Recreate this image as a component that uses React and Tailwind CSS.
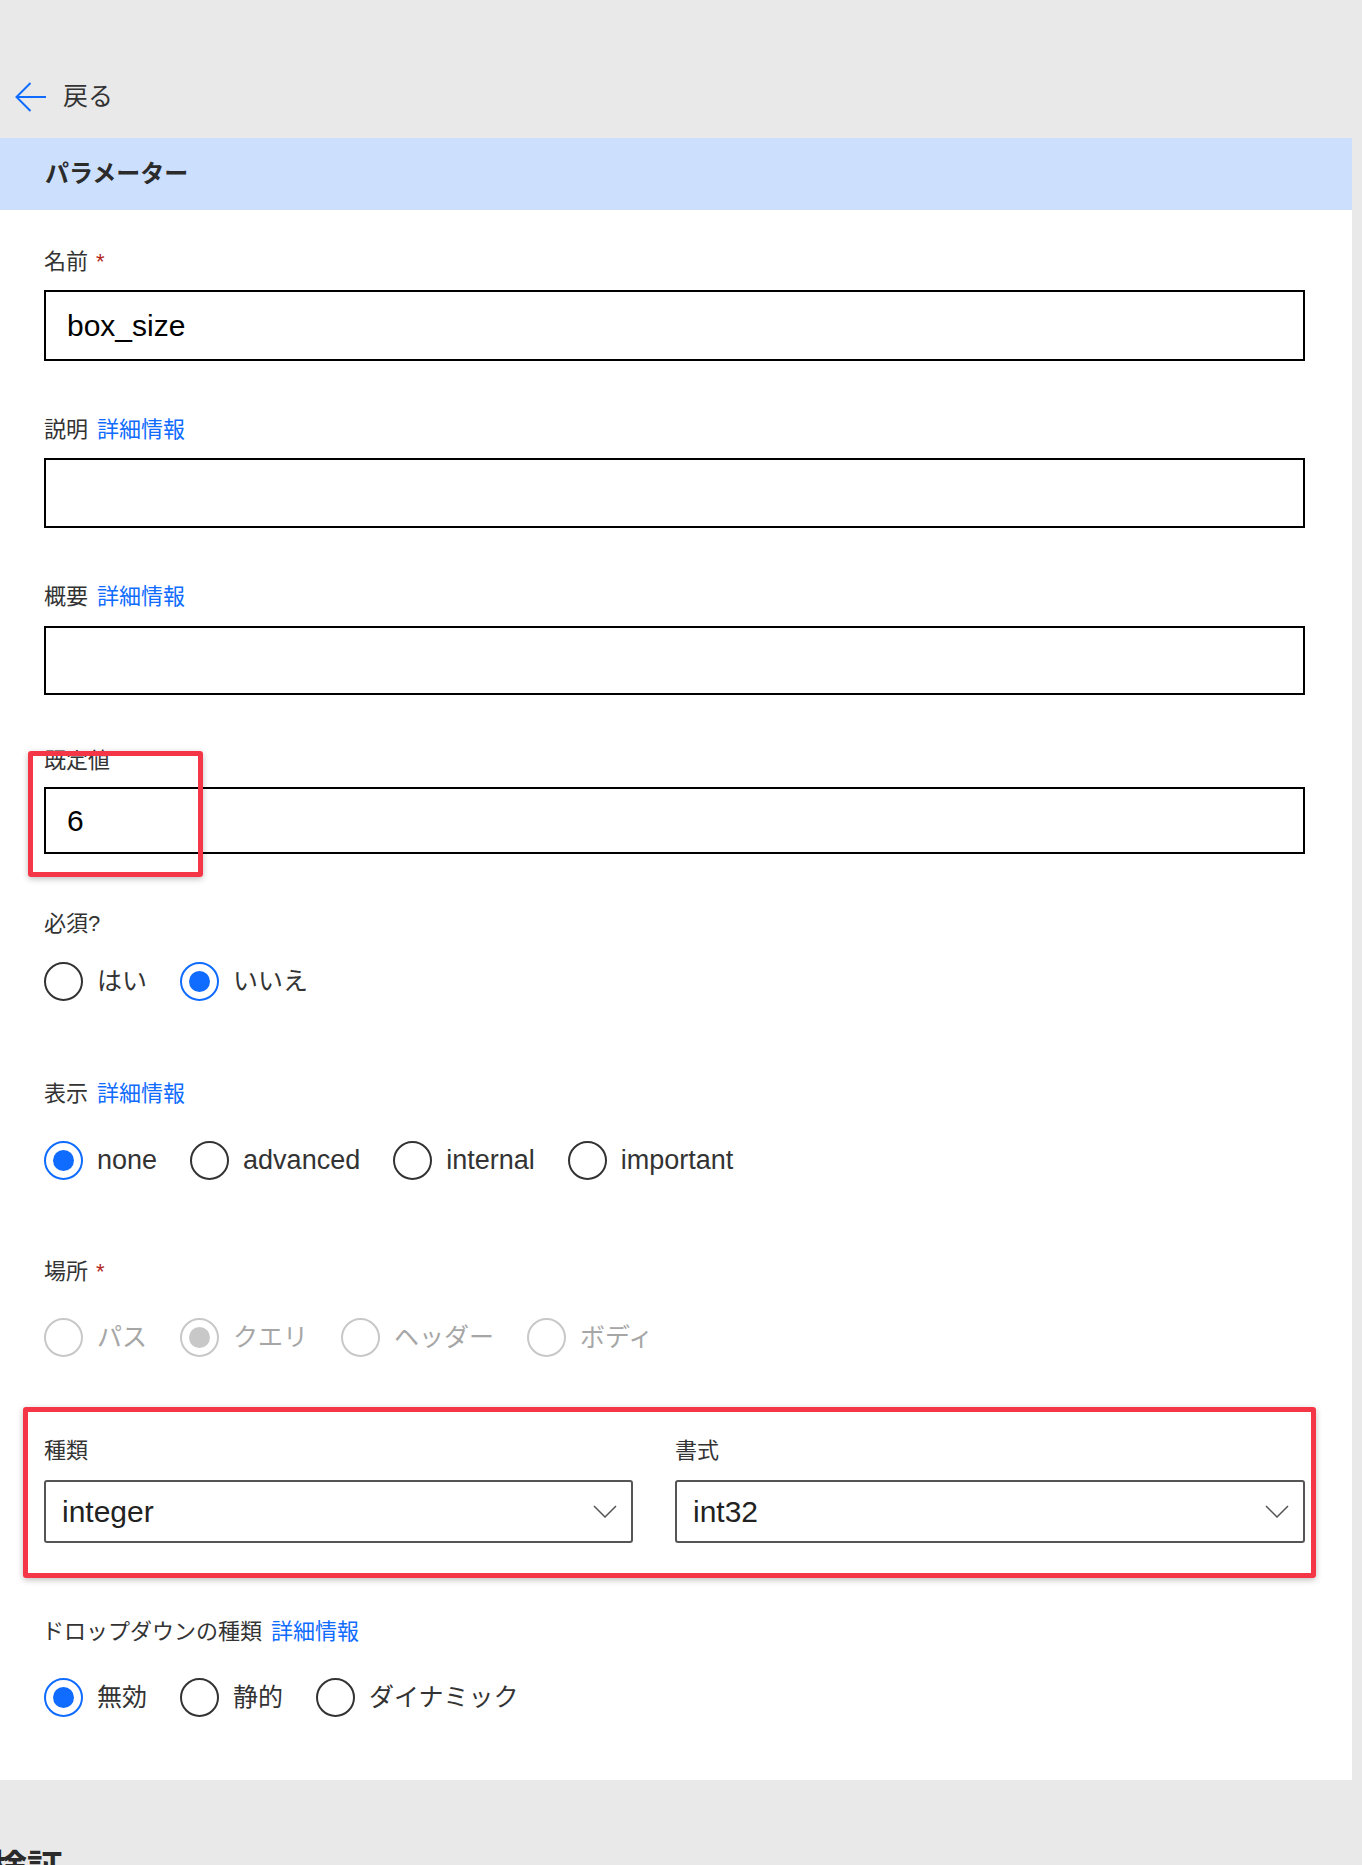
import React from 'react';

// ラジオボタン1つ分
const Radio = ({ label, checked, disabled, latin }) => {
    const ring = disabled
        ? 'border-[#c8c8c8]'
        : checked
        ? 'border-[#0f6cff]'
        : 'border-[#333333]';
    const dot = disabled ? 'bg-[#c8c8c8]' : 'bg-[#0f6cff]';
    const text = disabled ? 'text-[#a6a6a6]' : 'text-[#333333]';
    return (
        <label className="flex items-center gap-[14px]">
            <span className={`w-[39px] h-[39px] rounded-full border-2 flex items-center justify-center ${ring}`}>
                {checked && <span className={`w-[21px] h-[21px] rounded-full ${dot}`} />}
            </span>
            <span className={`${latin ? 'text-[27px]' : 'text-[25px]'} leading-[34px] ${text}`}>{label}</span>
        </label>
    );
};

const Label = ({ children, required, more, className = '' }) => (
    <div className={`text-[22px] leading-[30px] text-[#333333] ${className}`}>
        {children}
        {required && <span className="ml-[8px] text-[#b3261e]">*</span>}
        {more && <span className="ml-[9px] text-[#0f6cff]">詳細情報</span>}
    </div>
);

const TextInput = ({ value, className = '' }) => (
    <div className={`w-full border-2 border-black flex items-center pl-[21px] text-[30px] text-black ${className}`}>
        {value}
    </div>
);

const Select = ({ value }) => (
    <div className="h-[63px] border-2 border-[#555555] rounded-[3px] flex items-center justify-between pl-[16px] pr-[14px]">
        <span className="text-[30px] text-[#222222]">{value}</span>
        <svg width="24" height="13" viewBox="0 0 24 13" fill="none">
            <polyline points="1,1 12,12 23,1" stroke="#555555" strokeWidth="1.5" />
        </svg>
    </div>
);

export default function App() {
    return (
        <div className="min-h-screen bg-[#e9e9e9] font-['Liberation_Sans','Noto_Sans_CJK_JP',sans-serif] overflow-hidden">
            {/* 戻る */}
            <div className="h-[30px] mt-[82px] flex items-center pl-[15px]">
                <svg width="32" height="30" viewBox="0 0 32 30" fill="none">
                    <path d="M31 15H2M15.5 1L1.5 15L15.5 29" stroke="#0f6cff" strokeWidth="2" />
                </svg>
                <span className="ml-[16px] text-[25px] text-[#333333]">戻る</span>
            </div>

            <div className="w-[1352px] mt-[26px] bg-white relative">
                <div className="h-[72px] bg-[#cce0fe] flex items-center pl-[45px]">
                    <h2 className="text-[24px] font-bold text-[#2b2b2b]">パラメーター</h2>
                </div>

                <div className="pl-[44px] pr-[47px] pt-[37px] pb-[63px]">
                    <Label required>名前</Label>
                    <TextInput value="box_size" className="mt-[13px] h-[71px]" />

                    <Label more className="mt-[54px]">説明</Label>
                    <TextInput className="mt-[13px] h-[70px]" />

                    <Label more className="mt-[54px]">概要</Label>
                    <TextInput className="mt-[14px] h-[69px]" />

                    <Label className="mt-[51px]">既定値</Label>
                    <TextInput value="6" className="mt-[11px] h-[67px]" />

                    <Label className="mt-[55px]">必須?</Label>
                    <div className="mt-[22px] h-[40px] flex items-center gap-[33px]">
                        <Radio label="はい" />
                        <Radio label="いいえ" checked />
                    </div>

                    <Label more className="mt-[78px]">表示</Label>
                    <div className="mt-[31px] h-[40px] flex items-center gap-[33px]">
                        <Radio label="none" checked latin />
                        <Radio label="advanced" latin />
                        <Radio label="internal" latin />
                        <Radio label="important" latin />
                    </div>

                    <Label required className="mt-[77px]">場所</Label>
                    <div className="mt-[30px] h-[40px] flex items-center gap-[33px]">
                        <Radio label="パス" disabled />
                        <Radio label="クエリ" checked disabled />
                        <Radio label="ヘッダー" disabled />
                        <Radio label="ボディ" disabled />
                    </div>

                    <div className="mt-[79px] grid grid-cols-[589px_1fr] gap-x-[42px]">
                        <div>
                            <Label>種類</Label>
                            <div className="mt-[14px]">
                                <Select value="integer" />
                            </div>
                        </div>
                        <div>
                            <Label>書式</Label>
                            <div className="mt-[14px]">
                                <Select value="int32" />
                            </div>
                        </div>
                    </div>

                    <Label more className="mt-[74px] -ml-[2px]">ドロップダウンの種類</Label>
                    <div className="mt-[30px] h-[40px] flex items-center gap-[33px]">
                        <Radio label="無効" checked />
                        <Radio label="静的" />
                        <Radio label="ダイナミック" />
                    </div>
                </div>

                {/* 注釈の赤枠 */}
                <div className="absolute left-[28px] top-[613px] w-[175px] h-[126px] border-[5px] border-[#f43647] rounded-[3px] shadow-[0_2px_6px_rgba(0,0,0,0.25)]" />
                <div className="absolute left-[23px] top-[1269px] w-[1293px] h-[171px] border-[5px] border-[#f43647] rounded-[3px] shadow-[0_2px_6px_rgba(0,0,0,0.25)]" />
            </div>

            <h2 className="mt-[67px] -ml-[9px] text-[36px] leading-[44px] font-bold text-[#2b2b2b]">検証</h2>
        </div>
    );
}
